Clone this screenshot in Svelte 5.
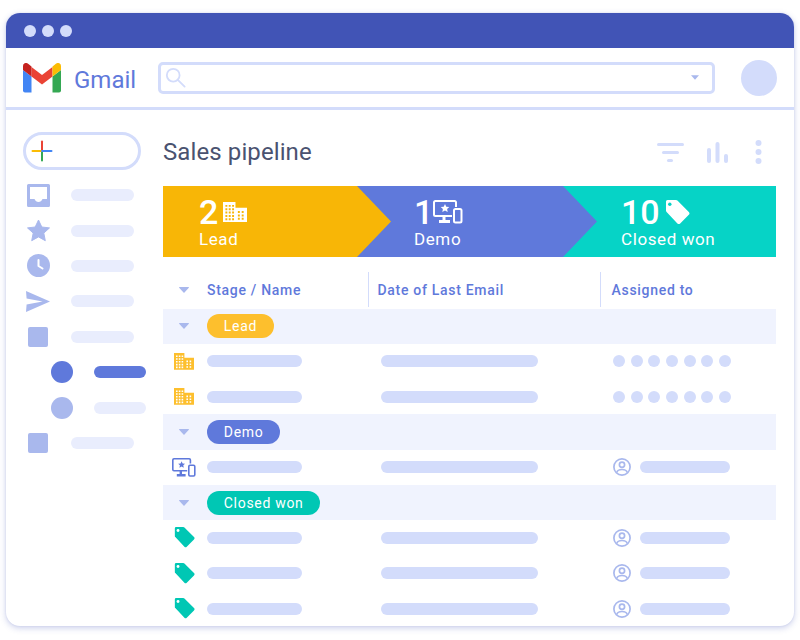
<script>
  const sideItems = [
    { icon: 'inbox', w: 63 },
    { icon: 'star', w: 63 },
    { icon: 'clock', w: 63 },
    { icon: 'send', w: 63 },
    { icon: 'square', w: 63 },
    { icon: 'dot', w: 52, sub: true, active: true },
    { icon: 'dot', w: 52, sub: true },
    { icon: 'square', w: 63 }
  ];

  const stages = [
    { name: 'Lead', color: '#fdbf2d', icon: 'building', rows: 2, dots: true },
    { name: 'Demo', color: '#5f79db', icon: 'demo', rows: 1 },
    { name: 'Closed won', color: '#00c7b4', icon: 'tag', rows: 3 }
  ];

  // windows of the building, cut out of the filled shape
  function holes(xs, ys) {
    let d = '';
    for (const x of xs) for (const y of ys) d += `M${x} ${y}h2v2h-2z`;
    return d;
  }
  const buildingPath =
    'M0 0h13v6h12v15H0z' +
    holes([2.5, 6, 9.5], [3, 6.5, 10, 13.5, 17]) +
    holes([15.5, 19.5], [9.5, 13, 16.5]);
</script>

{#snippet building(color, w)}
  <svg width={w} viewBox="0 0 25 21" fill={color}><path fill-rule="evenodd" d={buildingPath} /></svg>
{/snippet}

{#snippet demo(color, w)}
  <svg width={w} viewBox="0 0 30 24" fill="none" stroke={color} stroke-width="2">
    <path d="M19 16H2.500a1.500 1.500 0 0 1-1.500-1.500V2.500A1.500 1.500 0 0 1 2.500 1h19A1.500 1.500 0 0 1 23 2.500V7" />
    <path d="M11 16v4M6 21.500h11" stroke-width="3" />
    <rect x="21" y="9" width="7.500" height="13.500" rx="1.500" />
    <path d="M12 4l1.300 2.800 3 .3-2.200 2 .6 3-2.700-1.500-2.700 1.500.6-3-2.200-2 3-.3z" fill={color} stroke="none" />
  </svg>
{/snippet}

{#snippet tag(color, w, hole)}
  <svg width={w} viewBox="0 0 25 25">
    <path d="M1 1.500A1.500 1.500 0 0 1 2.500 0H11a2 2 0 0 1 1.400.6l11.400 11.400a2 2 0 0 1 0 2.800l-8.600 8.600a2 2 0 0 1-2.800 0L1.600 12A2 2 0 0 1 1 10.500z" fill={color} />
    <circle cx="4.800" cy="4.200" r="1.700" fill={hole} />
  </svg>
{/snippet}

{#snippet caret()}
  <svg class="caret" width="10" height="6" viewBox="0 0 12 7"><path d="M.5 0h11a.5.5 0 0 1 .3.800L6.600 6.500a.8.8 0 0 1-1.200 0L.2.800A.5.5 0 0 1 .5 0z" fill="#a9b8ed" /></svg>
{/snippet}

{#snippet person()}
  <svg width="18" height="18" viewBox="0 0 18 18" fill="none" stroke="#a9b8ed" stroke-width="1.700">
    <circle cx="9" cy="9" r="8.100" />
    <circle cx="9" cy="6.800" r="2.600" />
    <path d="M3.800 14.500c.5-2 2.600-3 5.200-3s4.700 1 5.200 3" />
  </svg>
{/snippet}

{#snippet sideIcon(name, active)}
  {#if name === 'inbox'}
    <svg width="23" height="23" viewBox="0 0 23 23"><path fill-rule="evenodd" d="M1.500 0h20A1.500 1.500 0 0 1 23 1.500v20a1.500 1.500 0 0 1-1.500 1.500h-20A1.500 1.500 0 0 1 0 21.500v-20A1.500 1.500 0 0 1 1.500 0zM3 3v12h4.500c.8 2 2.200 3 4 3s3.200-1 4-3H20V3z" fill="#a9b8ed" /></svg>
  {:else if name === 'star'}
    <svg width="23" height="22" viewBox="0 0 23 22"><path d="M11.500 0l3.300 7 7.700.9-5.700 5.200 1.500 7.600-6.800-3.800-6.800 3.800 1.500-7.600L.5 7.900 8.200 7z" fill="#a9b8ed" stroke="#a9b8ed" stroke-linejoin="round" /></svg>
  {:else if name === 'clock'}
    <svg width="23" height="23" viewBox="0 0 23 23"><circle cx="11.500" cy="11.500" r="11.500" fill="#a9b8ed" /><path d="M11.500 6v6l4 2.500" fill="none" stroke="#fff" stroke-width="2" stroke-linecap="round" stroke-linejoin="round" /></svg>
  {:else if name === 'send'}
    <svg width="24" height="21" viewBox="0 0 24 21"><path d="M0 0l24 10.500L0 21l.6-7.500 16-3L.6 7.500z" fill="#a9b8ed" /></svg>
  {:else if name === 'square'}
    <span class="square"></span>
  {:else}
    <span class="dot" class:on={active}></span>
  {/if}
{/snippet}

<div class="window">
  <header class="titlebar">
    <i></i><i></i><i></i>
  </header>

  <div class="toolbar">
    <div class="brand">
      <svg width="38" height="30" viewBox="0 0 38 30">
        <path d="M0 7l8.500 6.500v16H2a2 2 0 0 1-2-2z" fill="#4285f4" />
        <path d="M38 7l-8.500 6.500v16H36a2 2 0 0 0 2-2z" fill="#34a853" />
        <path d="M8.500 4L19 12l10.500-8v9.500L19 21.500 8.500 13.500z" fill="#ea4335" />
        <path d="M0 3a3 3 0 0 1 4.800-2.400L8.500 3.500v10L0 7z" fill="#c5221f" />
        <path d="M29.500 3.500l3.700-2.900A3 3 0 0 1 38 3v4l-8.500 6.500z" fill="#fbbc04" />
      </svg>
      <span>Gmail</span>
    </div>
    <div class="search">
      <svg width="21" height="21" viewBox="0 0 23 23" fill="none" stroke="#d3dcfb" stroke-width="2"><circle cx="9" cy="9" r="7" /><path d="M14 14l7.500 7.500" stroke-linecap="round" /></svg>
      <svg width="8" height="5" viewBox="0 0 12 7"><path d="M0 0h12L6 7z" fill="#a9b8ed" /></svg>
    </div>
    <div class="avatar"></div>
  </div>

  <div class="body">
    <aside>
      <div class="compose">
        <svg width="22" height="22" viewBox="0 0 22 22" fill="none" stroke-width="2" stroke-linecap="round">
          <path d="M11 1.500V11" stroke="#ea4335" />
          <path d="M11 11v9.500" stroke="#34a853" />
          <path d="M1.500 11H11" stroke="#fbbc04" />
          <path d="M11 11h9.500" stroke="#4285f4" />
        </svg>
      </div>
      <ul>
        {#each sideItems as item}
          <li class:sub={item.sub}>
            <span class="side-icon">{@render sideIcon(item.icon, item.active)}</span>
            <span class="bar side-bar" class:on={item.active} style="width: {item.w}px"></span>
          </li>
        {/each}
      </ul>
    </aside>

    <main>
      <div class="title-row">
        <h1>Sales pipeline</h1>
        <div class="tools">
          <svg width="27" height="19" viewBox="0 0 27 19" fill="#d3dcfb"><rect width="27" height="3" rx="1.500" /><rect x="5" y="8" width="17" height="3" rx="1.500" /><rect x="10" y="16" width="6" height="3" rx="1.500" /></svg>
          <svg width="21" height="21" viewBox="0 0 21 21" fill="#d3dcfb"><rect y="6" width="4" height="15" rx="2" /><rect x="8.500" width="4" height="21" rx="2" /><rect x="17" y="12" width="4" height="9" rx="2" /></svg>
          <svg class="more" width="7" height="24" viewBox="0 0 7 24" fill="#d3dcfb"><circle cx="3.500" cy="3" r="3" /><circle cx="3.500" cy="12" r="3" /><circle cx="3.500" cy="21" r="3" /></svg>
        </div>
      </div>

      <div class="funnel">
        <div class="step lead">
          <div class="count">2 {@render building('#fff', 24)}</div>
          <div class="label">Lead</div>
        </div>
        <div class="step demo-step">
          <div class="count">1 {@render demo('#fff', 30)}</div>
          <div class="label">Demo</div>
        </div>
        <div class="step won">
          <div class="count">10 {@render tag('#fff', 25, '#06d3c6')}</div>
          <div class="label">Closed won</div>
        </div>
      </div>

      <div class="thead">
        <span class="arrow">{@render caret()}</span>
        <span>Stage / Name</span>
        <span class="th">Date of Last Email</span>
        <span class="th">Assigned to</span>
      </div>

      {#each stages as stage}
        <div class="group">
          <span class="arrow">{@render caret()}</span>
          <span class="pill" style="background: {stage.color}">{stage.name}</span>
        </div>
        {#each Array(stage.rows) as _}
          <div class="row">
            <span class="arrow">
              {#if stage.icon === 'building'}
                {@render building('#fdbf2d', 20)}
              {:else if stage.icon === 'demo'}
                {@render demo('#5f79db', 24)}
              {:else}
                {@render tag('#00c7b4', 21, '#fff')}
              {/if}
            </span>
            <span class="bar name"></span>
            <span class="bar date"></span>
            {#if stage.dots}
              <span class="dots">{#each Array(7) as _}<i></i>{/each}</span>
            {:else}
              <span class="owner">{@render person()}<span class="bar who"></span></span>
            {/if}
          </div>
        {/each}
      {/each}
    </main>
  </div>
</div>

<style>
  :global(body) {
    background: #fff;
    font-family: Roboto, "Liberation Sans", sans-serif;
  }

  .window {
    box-sizing: border-box;
    width: 788px;
    height: 613px;
    margin: 13px 6px 14px;
    border-radius: 14px;
    background: #fff;
    box-shadow: 0 2px 6px rgba(65, 84, 182, 0.28), 0 0 2px rgba(65, 84, 182, 0.12);
    overflow: hidden;
  }

  .titlebar {
    display: flex;
    align-items: center;
    gap: 6px;
    height: 35px;
    padding-left: 18px;
    background: #4154b6;
  }

  .titlebar i {
    width: 12px;
    height: 12px;
    border-radius: 50%;
    background: #d3dcfb;
  }

  .toolbar {
    display: flex;
    align-items: center;
    height: 59px;
    padding: 0 17px;
    border-bottom: 3px solid #d3dcfb;
  }

  .brand {
    display: flex;
    align-items: center;
    gap: 13px;
    width: 135px;
    font-size: 24px;
    color: #5f79db;
  }

  .brand span {
    padding-top: 4px;
  }

  .search {
    box-sizing: border-box;
    display: flex;
    align-items: center;
    justify-content: space-between;
    width: 557px;
    height: 32px;
    padding: 0 13px 0 4px;
    border: 3px solid #d3dcfb;
    border-radius: 5px;
  }

  .avatar {
    width: 36px;
    height: 36px;
    margin-left: 26px;
    border-radius: 50%;
    background: #d3dcfb;
  }

  .body {
    display: flex;
    padding-top: 22px;
  }

  aside {
    width: 157px;
    flex: none;
    padding-left: 17px;
    box-sizing: border-box;
  }

  .compose {
    box-sizing: border-box;
    display: flex;
    align-items: center;
    width: 118px;
    height: 38px;
    padding-left: 5px;
    border: 3px solid #d3dcfb;
    border-radius: 19px;
  }

  ul {
    margin: 7.500px 0 0;
    padding: 0;
    list-style: none;
  }

  li {
    display: flex;
    align-items: center;
    height: 35.400px;
  }

  li.sub {
    padding-left: 24px;
  }

  .side-icon {
    display: flex;
    justify-content: center;
    width: 30px;
  }

  .square {
    width: 20px;
    height: 20px;
    border-radius: 2px;
    background: #a9b8ed;
  }

  .dot {
    width: 22px;
    height: 22px;
    border-radius: 50%;
    background: #a9b8ed;
  }

  .dot.on {
    background: #5f79db;
  }

  .bar {
    display: block;
    height: 12px;
    border-radius: 6px;
    background: #d3dcfb;
  }

  .side-bar {
    margin-left: 18px;
    background: #e9edfd;
  }

  li.sub .side-bar {
    margin-left: 17px;
  }

  .side-bar.on {
    background: #5f79db;
  }

  main {
    width: 613px;
    flex: none;
  }

  .title-row {
    display: flex;
    align-items: center;
    justify-content: space-between;
    height: 40px;
  }

  h1 {
    margin: 0;
    font-size: 24px;
    font-weight: 400;
    letter-spacing: 0.1px;
    color: #4a5270;
  }

  .tools {
    display: flex;
    align-items: center;
    gap: 23px;
    padding-right: 14px;
  }

  .more {
    margin-left: 4px;
  }

  .funnel {
    display: flex;
    height: 71px;
    margin-top: 14px;
    color: #fff;
    background: #06d3c6;
  }

  .step {
    box-sizing: border-box;
    height: 100%;
    flex: none;
  }

  .lead {
    position: relative;
    z-index: 2;
    width: 228px;
    padding-left: 36px;
    background: #f8b606;
    clip-path: polygon(0 0, 194px 0, 100% 50%, 194px 100%, 0 100%);
  }

  .demo-step {
    position: relative;
    z-index: 1;
    width: 240px;
    margin-left: -34px;
    padding-left: 57px;
    background: #5f79db;
    clip-path: polygon(0 0, 206px 0, 100% 50%, 206px 100%, 0 100%);
  }

  .won {
    margin-left: -34px;
    padding-left: 58px;
  }

  .count {
    display: flex;
    align-items: center;
    gap: 5px;
    height: 42px;
    padding-top: 10px;
    box-sizing: border-box;
    font-size: 34px;
    line-height: 32px;
    font-weight: 500;
  }

  .demo-step .count {
    gap: 0;
  }

  .label {
    margin-top: 1px;
    font-size: 17px;
    line-height: 20px;
    letter-spacing: 0.6px;
  }

  .thead,
  .row {
    display: grid;
    grid-template-columns: 44px 174px 232px 1fr;
    align-items: center;
  }

  .thead {
    grid-template-columns: 44px 161px 232px 1fr;
    height: 35px;
    margin: 15px 0 1.500px;
    font-size: 14px;
    font-weight: 500;
    letter-spacing: 0.7px;
    color: #5f79db;
  }

  .th {
    align-self: stretch;
    display: flex;
    align-items: center;
    padding-left: 8.500px;
    border-left: 1.500px solid #d3dcfb;
  }

  .th:last-child {
    padding-left: 10.500px;
  }

  .arrow {
    display: flex;
    align-items: center;
    justify-content: center;
    width: 42px;
  }

  .group {
    display: flex;
    align-items: center;
    height: 35.300px;
    background: #f0f3fe;
  }

  .group .arrow {
    width: 44px;
    padding-right: 2px;
    box-sizing: border-box;
  }

  .pill {
    padding: 0 16.800px;
    height: 24px;
    line-height: 24px;
    border-radius: 12px;
    font-size: 14px;
    letter-spacing: 0.7px;
    color: #fff;
  }

  .row {
    height: 35.300px;
  }

  .name {
    width: 95px;
  }

  .date {
    width: 157px;
  }

  .dots {
    display: flex;
    gap: 5.700px;
  }

  .dots i {
    width: 12px;
    height: 12px;
    border-radius: 50%;
    background: #d3dcfb;
  }

  .owner {
    display: flex;
    align-items: center;
    gap: 9px;
  }

  .who {
    width: 90px;
  }
</style>
